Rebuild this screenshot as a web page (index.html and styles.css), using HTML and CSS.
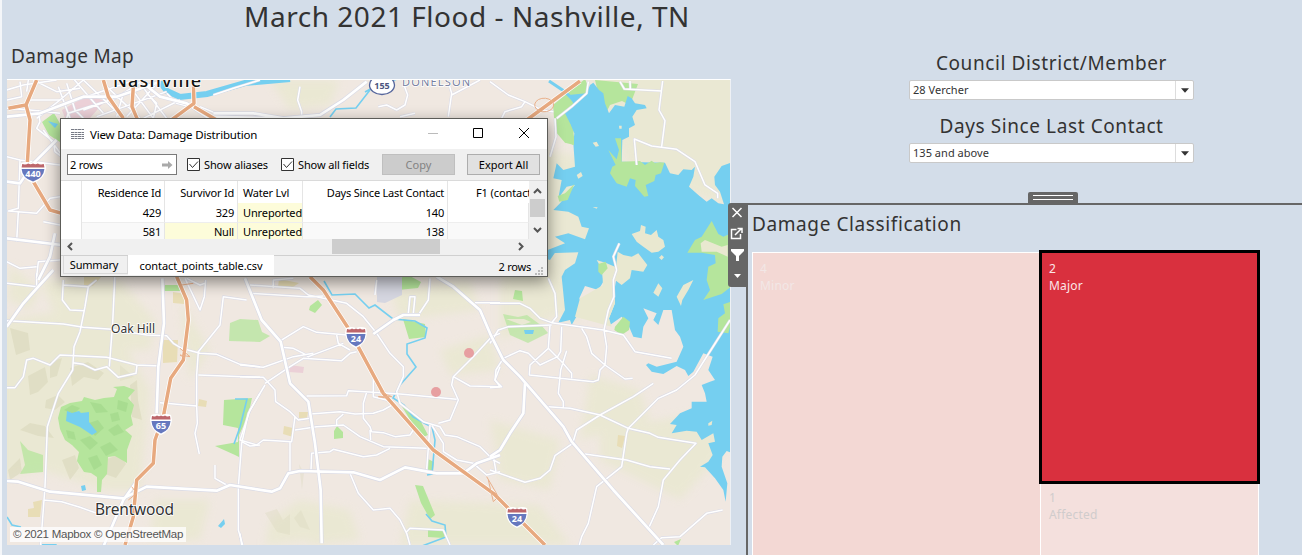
FILE: index.html
```html
<!DOCTYPE html>
<html lang="en">
<head>
<meta charset="utf-8">
<title>March 2021 Flood - Nashville, TN</title>
<link rel="stylesheet" href="styles.css">
</head>
<body>
<main class="dashboard">
<section class="left">
<h1>March 2021 Flood - Nashville, TN</h1>
<h2 class="map-title">Damage Map</h2>
<div class="map">
<svg class="map-svg" viewBox="7 80 723 465" width="723" height="465">
<defs>
<filter id="soft" x="-20%" y="-20%" width="140%" height="140%"><feGaussianBlur stdDeviation="4"/></filter>
<g id="minor">
<g>
<path d="M20 270 70 255 170 240M110 145 150 190 180 200M80 275 85 240 115 200 135 140M20 325 90 330 180 340M200 250 225 330 250 355M175 260 210 355M215 230 310 340M250 240 370 355M310 250 420 355M230 300 390 245M250 330 440 260M290 350 500 275M350 350 370 280 430 240M380 350 440 285 480 240M430 355 540 300M460 355 470 310 440 280M110 355 180 300 250 240M100 240 170 275 240 265M200 355 205 340 330 300M390 260 460 355M420 250 500 355"/>
<path d="M500 280 530 310 570 320M600 320 660 345 720 340M900 260 893 300 905 335 905 355M640 285 700 265 780 240M760 350 830 355"/>
</g>
<g transform="translate(0 225)">
<path d="M85 75 180 75M60 20 65 65 20 75M115 105 120 140 110 160 160 200 165 230 185 245M130 165 185 240M20 245 60 255 55 400 25 408 110 415 150 370 180 365M60 255 180 270M55 410 50 500M110 605 115 560 180 555M20 560 60 580 110 575M130 440 180 450"/>
</g>
<g transform="translate(1095 210)">
<path d="M115 40 128 75 120 105 95 120 65 105 40 110M105 140 150 130M260 75 345 30M250 140 260 70 250 35M375 35 430 75 480 95 530 120 565 125M480 95 470 110 420 125 410 145M575 145 620 110 665 70 670 35M570 145 573 200 555 260M765 35 778 57 890 63M795 33 796 57M893 33 882 120 900 152 890 230M815 285 808 207 860 228 935 238 990 275 1020 345 1058 370 1058 385"/>
</g>
<g transform="translate(0 810)">
<path d="M20 40 110 50 140 20M110 50 110 10M190 30 187 90 210 120 255 122M345 10 338 160 328 290M20 152 190 162 250 172 335 178 440 195 500 197 520 220 545 235 600 250 650 253 720 283 780 290M265 50 255 110 240 185 222 230 218 300 175 370 142 470 135 650 122 825M20 353 45 353 70 320 80 270 100 265 150 285 180 255 320 262 410 285 480 288M218 278 250 283 285 300 320 290 355 322 408 310 411 285M560 25 600 45 615 40M555 25 600 120 613 80 617 30M480 398 590 408 590 315 595 245 660 165 670 80 740 90M595 315 780 322M590 408 592 460 585 490 598 552M645 585 645 625 680 645M130 690 185 695 240 712 290 730M780 370 745 430 725 520 715 650 715 780 728 825M725 515 750 528 780 525M190 45 265 50 290 30"/>
</g>
<g transform="translate(720 810)">
<path d="M30 45 180 55 205 75 320 100 370 140 410 190 450 250 490 290 490 320 470 365 480 400 550 455 600 470 615 495 650 500 720 530 760 570 780 580M30 70 200 80 250 78M100 55 100 30 160 25M122 212 190 170 230 187 320 195M125 232 160 235 190 250 205 260 310 220M0 285 70 292 160 260 220 250M75 340 150 290 190 265 305 272 330 250 350 245M290 195 295 220 330 240M0 320 70 322 105 360 107 395 150 425 175 450 210 445M75 345 30 420 0 510 50 525 70 510 155 515 165 440M200 378 320 377 325 362 400 367 480 372 650 388M212 432 300 425 345 432 400 430 430 420 465 400M165 480 230 470 310 465 360 500 430 530 560 535M290 465 290 450 310 432M380 367 370 400 370 445 390 470 395 485 430 488 465 500 510 495 520 480M400 320 400 380 460 395M390 480 392 510M150 515 150 610M213 600 215 550 270 545 280 538 370 560 410 555 450 535M330 610 355 670 400 720 450 715 480 750 500 790 510 825M500 785 510 775 610 780 630 825M405 75 410 30M505 130 510 80 525 80 520 130M570 25 565 90 535 135M595 460 630 450 655 390 635 345 640 320 700 260 755 200 780 190M640 320 690 348 780 350M705 98 780 98M575 465 610 520 610 545 650 570 700 580 740 615 780 605M560 600 570 465M0 790 5 825M780 290 765 330 780 350"/>
</g>
<g transform="translate(1470 810)">
<path d="M0 100 90 100 120 115 150 145 185 158 270 170 340 180 400 195 435 245 545 265M185 158 200 140 195 70 175 25M0 220 25 180 55 170 185 165M180 165 175 235 215 275 245 310 245 325M215 170 212 245 203 260 150 285 115 250 90 242 40 265 18 300 15 330 35 350 0 353M230 242 212 300 205 370 220 395 220 412M175 235 120 285 118 315 310 335 325 330 330 300 345 285 350 230 342 180 355 120 372 80 370 30 380 0M275 175 290 200 305 250 345 285 405 327 428 325M175 410 240 415 330 435 415 475 480 490 505 502 618 520 570 570 520 630 505 710 478 770M490 340 430 380 330 435 260 480 248 520 195 557 180 600 150 625 105 637 0 600M720 150 615 315 560 360 505 385 415 475 410 490 395 590 320 650 295 760 275 800 268 825M285 552 410 570 480 590 540 597M490 825 515 803 570 800 650 730 698 720M0 558 12 570 18 605"/>
<path d="M380 0 370 -40 388 -80"/>
</g>
</g>
<g id="major">
<path d="M20 350 120 340 250 290 350 290 480 245M430 250 480 290 560 310 620 350 830 355M640 340 760 340 850 355 960 345 1030 300 1100 245"/>
<path d="M20 545 60 550 100 490 170 420M20 715 185 735M115 840 150 770 165 700"/>
<path d="M20 980 70 910 110 865 160 810M487 835 492 970 475 1100 470 1240M20 1443 55 1445 150 1475 370 1495 440 1460 650 1472 690 1455 815 1475 840 1465 865 1420 900 1413 1060 1417 1140 1440 1215 1402 1310 1420 1390 1420 1430 1390 1500 1365M310 1640 370 1500 420 1430 460 1390M735 835 785 960 842 1025 870 1150 925 1205 945 1330 962 1470 965 1630"/>
<path d="M1310 830 1360 860 1440 930 1470 1000 1510 1080 1560 1130 1690 1280 1715 1325 1840 1470 1990 1635"/>
<path d="M1120 1002 1180 960 1210 945 1260 945M1575 1150 1570 1240 1530 1300 1500 1350 1470 1370"/>
</g>
<g id="hwy">
<path d="M110 240 78 315 25 325M78 315 90 360 82 490 100 545 150 630 185 640M310 240 325 290 370 355M580 245 582 310 500 370M582 320 650 360"/>
<path d="M400 260 396 320 415 365"/>
<path d="M1740 243 1580 360"/>
<path d="M530 830 560 900 565 960 550 1080 512 1135 490 1250 465 1320 460 1390 410 1440 400 1550 375 1635"/>
<path d="M930 830 970 870 1045 985 1150 1180 1300 1350 1480 1480 1635 1635"/>
</g>
</defs>
<rect class="land" x="0" y="70" width="740" height="480"/>
<g filter="url(#soft)" class="field">
<path d="M0 320 70 310 125 345 150 390 140 490 105 490 40 470 0 480zM270 80 340 80 330 105 290 110zM40 280 120 280 155 320 150 350 70 350zM590 70H740V210L680 190 630 170zM540 270 560 270 565 290 545 300zM500 280 540 295 550 320 500 340zM600 430 720 410 725 450 680 500 600 460zM410 500 540 505 570 545 400 545zM440 350 490 335 500 370 450 375zM490 420 560 440 550 490 500 480zM300 500 350 510 360 540 310 545zM590 375 640 390 650 420 580 440zM500 260 560 255 580 320 510 310zM270 520 300 500 310 540 265 545zM180 300 210 350 190 380zM390 290 470 280 480 310 400 320zM540 150 620 160 620 250 540 290zM10 265 40 290 30 310 8 300zM155 500 210 500 200 540 150 540z"/>
</g>
<g class="hill">
<path d="M10 328 28 333 30 350 16 355zM28 376 45 367 48 382 38 392 30 395zM50 362 62 358 57 376 50 378zM70 368 88 362 104 373 98 380 84 377 72 386zM46 400 58 395 65 402 55 410 45 408zM20 430 30 423 45 426 54 438 38 436zM8 470 20 458 22 472 10 480zM62 460 75 455 79 468 70 480zM130 385 137 380 138 400 142 420 132 417zM107 459 120 454 126 464 116 478 105 474z"/>
<path opacity=".6" d="M265 513 277 509 283 520 290 514 290 535 277 532zM294 518 301 510 310 530 300 527zM299 464 304 473 302 490zM120 365 134 377 120 381z"/>
</g>
<g class="park">
<path d="M61 407 70 403 82 401 84 397 95 400 104 398 114 397 117 389 113 387 124 386 135 390 128 398 134 405 131 416 133 425 125 430 132 436 127 450 127 463 115 456 108 457 107 474 102 480 101 492 97 492 97 477 91 473 84 472 77 461 79 452 72 445 65 440 60 429 58 418zM224 400 252 398 248 417 239 435 239 457 235 455 215 446 238 442 238 428 223 425z"/>
<path opacity=".75" d="M20 441 28 450 43 455 43 472 20 474 25 465zM230 323 240 319 258 320 262 332 270 336 260 342 229 341z"/>
<path d="M310 306 318 300 322 305 315 313 309 310zM403 319 425 324 426 337 409 339zM398 400 406 407 420 420 428 435 421 438zM334 431 337 426 343 432 343 438 334 439zM428 459 434 462 433 470 426 470zM415 485 423 486 428 498 435 515 430 519 421 503zM428 529 446 529 444 538 428 537zM42 122 54 113 62 127 60 142 49 135zM400 278 408 275 421 282 418 288 398 290zM515 290 522 291 523 301 513 299zM674 542 681 539 678 546zM165 285 180 285 181 291 164 291z"/>
<path d="M503 314 518 317 527 315 542 326 548 333 528 343 510 335zM506 319 522 325 531 322 524 319z" fill-rule="evenodd" opacity=".7"/>
<path d="M553 105 585 79 590 91 575 105 573 145 555 130zM595 80 638 84 630 105 622 101 610 105 605 115 601 105z"/>
</g>
<path class="park-shade" d="M64 410 72 405 80 408 74 414zM90 402 101 404 108 412 96 413zM86 424 98 420 104 428 95 436zM108 430 118 424 124 432 114 436zM80 440 90 436 98 443 90 450zM100 447 110 442 118 450 106 456zM66 430 74 432 76 440 68 438zM118 400 128 403 126 412 117 409zM88 458 97 455 102 465 94 470zM110 414 118 412 120 420 112 422z"/>
<g class="sand"><path d="M163 340 178 340 177 362 163 363zM84 272 102 276 93 286 84 287zM173 292 186 294 184 304 173 303zM199 399 207 401 206 407 198 406zM299 412 308 412 307 418 299 418zM284 426 293 428 293 437 283 434zM33 502 42 500 40 517 28 517 28 509 34 508zM279 279 299 283 290 289 278 287zM618 435 625 436 622 448 617 446z"/></g>
<path class="pink" d="M62 110 88 95 105 101 90 118 65 118zM290 365 304 367 303 373 289 372z"/>
<path class="airport" d="M377 276 402 276 402 295 385 303 377 302z"/>
<g transform="translate(535 70) scale(.33333)">
<path class="water" d="M155 70 165 45 175 38 192 60 205 70 210 100 222 130 240 105 268 110 278 78 290 85 300 100 330 105 335 115 305 120 292 140 300 165 282 175 282 200 262 210 260 275 385 278 390 278 405 310 430 315 445 298 470 300 480 290 475 320 462 350 490 375 515 395 530 385 550 400 567 403 555 365 540 345 538 320 560 288 588 278 588 1148 575 1143 562 1160 560 1190 577 1240 572 1295 565 1260 540 1225 510 1192 495 1190 520 1175 533 1155 520 1120 540 1115 535 1090 500 1110 485 1085 455 1082 410 1090 425 1065 405 1062 435 1030 470 1015 470 995 515 995 510 970 500 945 525 935 540 930 520 900 533 860 505 850 475 905 460 918 450 900 425 888 385 912 350 905 333 885 340 880 365 890 425 875 445 830 435 800 420 780 410 720 385 720 370 765 355 750 365 730 325 715 340 745 325 770 320 805 295 800 280 765 260 740 225 765 222 745 240 700 240 650 248 600 200 590 205 635 190 660 150 648 133 685 140 705 130 730 110 765 105 750 70 758 90 720 80 620 90 600 120 580 130 547 40 550 38 540 90 520 60 500 100 490 150 508 162 475 140 470 130 440 100 425 55 420 75 400 120 345 95 350 70 385 80 330 55 325 65 280 85 300 120 290 115 220 118 190 105 160 90 130 115 100 100 75z"/>
<path class="water-line" d="M42 33 90 65 125 100"/>
<g class="park">
<path d="M60 183 70 140 90 135 107 165 117 200 117 225 90 218zM240 205 258 205 260 275 315 273 330 285 350 272 360 280 375 277 388 278 378 310 362 315 358 333 332 345 340 378 328 380 300 348 302 330 285 325 275 350 245 340 225 310 232 290 242 285 220 240 245 268 252 240zM68 378 90 370 118 342 98 390 73 395zM457 548 480 510 500 500 530 453 550 492 565 500 588 490 588 650 560 672 505 690 525 660 515 630 520 590 542 580 540 555 500 548zM565 703 588 695 588 760 580 790 548 785 550 745 570 730zM240 770 265 740 285 755 282 780 260 795 238 780z"/>
</g>
<path class="isle" d="M497 520 510 510 560 530 578 525 578 560 545 545 500 545zM290 492 315 483 318 465 332 470 330 490 348 495 365 480 370 500 385 510 390 530 370 545 350 548 325 530 305 515zM248 545 265 555 290 560 310 550 337 585 325 605 290 600 285 625 260 645 240 630 242 600zM185 570 215 580 240 590 238 650 205 680 202 600zM355 668 370 640 382 655 370 680zM425 680 445 645 475 630 460 660 442 690 438 708zM125 315 138 306 143 318 130 326zM173 218 185 215 192 228 182 230zM252 167 260 167 260 176 253 176zM173 411 188 412 185 416zM372 563 380 555 387 562 380 570zM520 1060 532 1052 530 1065 520 1067zM135 685 205 645 240 640 240 700 222 745 230 770 120 740z"/>
<path class="park" d="M190 582 212 575 218 595 200 615 190 605zM190 605"/>
<path class="water" d="M-10 550 40 547 60 548 45 570 -10 552z"/>
</g>
<g class="water"><path d="M67 411 72 413 79 411 81 413 89 412 89 422 97 432 92 435 80 427 66 421zM81 486 85 485 86 490 82 491zM218 526 224 519 225 524 221 528zM524 330 534 330 533 334 525 334zM48 121 58 124 55 128zM40 544 57 544 55 547 40 547z"/></g>
<g class="water-line-fine">
<path d="M7 517 12 525 21 527M235 399 247 399 240 427 234 444M324 281 332 295 355 294 369 308 375 305 393 319 415 321 427 328 425 338 407 344 407 354 416 367 400 385 393 398 404 405 413 417 424 423 432 427 435 440 432 474 427 475M426 514 432 521 445 525 446 537 422 546M330 117 336 109 356 108 370 90M365 92 374 87 400 78"/>
</g>
<path class="river" d="M160 82 167 91 180 97 207 94 245 83 290 79"/>
<g transform="scale(.33333)">
<use href="#minor" class="minor-case"/><use href="#minor" class="minor-core"/>
<use href="#major" class="major-case"/><use href="#major" class="major-core"/>
<use href="#hwy" class="hwy-case"/><use href="#hwy" class="hwy-core"/>
<path class="ramp" d="M540 1045 570 1070 540 1065 555 1075M1140 1175 1175 1190 1135 1190 1165 1195M530 840 545 855 580 850M395 1460 410 1480 385 1500M1605 320a25 18 0 1 0 55-10a25 18 0 1 0-55 10M1460 1430 1495 1490 1480 1505 1465 1440"/>
</g>
<g class="dot"><circle cx="469" cy="353" r="5"/><circle cx="436" cy="392" r="5"/></g>
<defs><g id="shield"><path fill="#fff" d="M-10-9Q-5-11 0-9Q5-11 10-9L11-4Q10 7 0 11Q-10 7-11-4z"/><path fill="#6678be" d="M-9.5-3H9.5Q9 6 0 9.5Q-9 6-9.5-3z"/><path fill="#bd666b" d="M-9-8Q-6-7-4-8.500Q-2-7 0-8.500Q2-7 4-8.500Q6-7 9-8L9.500-4.500H-9.500z"/></g></defs>
<g class="shield-text">
<use href="#shield" transform="translate(33 172) scale(1.2 1)"/><text x="33" y="177">440</text>
<use href="#shield" x="161" y="424"/><text x="161" y="428.500">65</text>
<use href="#shield" x="356" y="337"/><text x="356" y="341.500">24</text>
<use href="#shield" x="517" y="517"/><text x="517" y="521.500">24</text>
</g>
<ellipse class="route" cx="382" cy="85" rx="12.500" ry="9.500"/>
<text class="route-text" x="382" y="88.500">155</text>
<text class="place city" x="113" y="87" textLength="88">Nashville</text>
<text class="place area" x="402" y="85.500" textLength="68">DONELSON</text>
<text class="place" x="111" y="333" textLength="44" font-size="12">Oak Hill</text>
<text class="place" x="95" y="515" textLength="79" font-size="15.500">Brentwood</text>
</svg>
<div class="credit">© 2021 Mapbox © OpenStreetMap</div>
</div>
</section>
<section class="right">
<div class="filters">
<h2 class="f1">Council District/Member</h2>
<div class="select"><span>28 Vercher</span><i><svg width="9" height="5" viewBox="0 0 9 5"><path d="M0 0H9L4.500 5z"/></svg></i></div>
<h2 class="f2">Days Since Last Contact</h2>
<div class="select"><span>135 and above</span><i><svg width="9" height="5" viewBox="0 0 9 5"><path d="M0 0H9L4.500 5z"/></svg></i></div>
</div>
<div class="grip"><b></b><b></b></div>
<section class="panel">
<div class="tools">
<svg width="20" height="84" fill="none" stroke="#fff" stroke-width="1.500"><path d="M4.500 5 13.500 14M13.500 5 4.500 14"/><path d="M8.500 26.500H3.500V35.500H12.500V31M7 32 13 26M9.500 25.500H14V30"/><path d="M3 46H16V48L11 53V58H8V53L3 48zM6 71H13L9.500 75z" fill="#fff" stroke="none"/></svg>
</div>
<h2 class="panel-title">Damage Classification</h2>
<div class="treemap">
<div class="minor">4<br>Minor</div>
<div class="side"><div class="major">2<br>Major</div><div class="affected">1<br>Affected</div></div>
</div>
</section>
</section>
<section class="dialog">
<header><svg width="13" height="11" stroke="#777b86" stroke-dasharray="3 .500"><path d="M0 .5H13M0 3.500H13M0 5.500H13M0 7.500H13M0 9.500H13"/></svg><span class="caption">View Data: Damage Distribution</span>
<svg class="winbtns" width="110" height="30" fill="none"><path stroke="#bbb" d="M6 14.500H16"/><path stroke="#000" d="M51.500 9.500H60.500V18.500H51.500zM97 9 107 19M107 9 97 19"/></svg></header>
<div class="bar">
<div class="rows">2 rows<svg width="11" height="8"><path fill="#aaa" d="M0 2.500H6V0L10.500 4 6 8V5.500H0z"/></svg></div>
<label class="c1"><svg width="13" height="13"><path d="M.5 .5H12.500V12.500H.5z"/><path d="M2.500 6 5.500 9.500 11 3.500"/></svg><span>Show aliases</span></label>
<label class="c2"><svg width="13" height="13"><path d="M.5 .5H12.500V12.500H.5z"/><path d="M2.500 6 5.500 9.500 11 3.500"/></svg><span>Show all fields</span></label>
<div class="btn disabled">Copy</div><div class="btn">Export All</div>
</div>
<div class="grid-wrap">
<div class="grid">
<i></i><span>Residence Id</span><span>Survivor Id</span><span class="l">Water Lvl</span><span>Days Since Last Contact</span><span class="cut">F1 (contact</span>
<i></i><span>429</span><span>329</span><span class="l y">Unreported</span><span>140</span><span></span>
<i></i><span class="alt">581</span><span class="alt y">Null</span><span class="l alt y">Unreported</span><span class="alt">138</span><span class="alt"></span>
</div>
<svg class="vscroll" width="17" height="58" fill="none" stroke="#555" stroke-width="2"><path fill="#cdcdcd" stroke="none" d="M1 18H16V36H1z"/><path d="M5 12 8.500 8.500 12 12M5 47 8.500 50.500 12 47"/></svg>
</div>
<svg class="hscroll" width="486" height="16" fill="none" stroke="#555" stroke-width="2"><path fill="#cdcdcd" stroke="none" d="M271 0H379V15H271z"/><path d="M11 4 7.500 7.500 11 11M458 4 461.500 7.500 458 11"/></svg>
<footer><div class="tab">Summary</div><div class="tab on">contact_points_table.csv</div><span class="count">2 rows</span><svg width="9" height="9" fill="#bbb"><path d="M6 0h2v2H6zM3 3h2v2H3zM6 3h2v2H6zM0 6h2v2H0zM3 6h2v2H3zM6 6h2v2H6z"/></svg></footer>
</section>
</main>
</body>
</html>
```
FILE: styles.css
```css
* { box-sizing: border-box; }
body { margin: 0; background: #d3dde9; font-family: "Noto Sans", sans-serif; color: #333; overflow: hidden; }
.dashboard { position: relative; display: grid; grid-template-columns: 744px 556px; width: 1302px; height: 555px; border-left: 2px solid #f4f6f9; overflow: hidden; white-space: nowrap; }
h1, h2 { margin: 0; font-weight: 400; }
h1 { height: 42px; padding-left: 242px; font-size: 28px; line-height: 33px; letter-spacing: .53px; }
h2 { font-size: 19px; letter-spacing: .6px; }
.map-title { height: 37px; padding-left: 9px; line-height: 29px; letter-spacing: .3px; }
.map { position: relative; width: 724px; height: 466px; margin-left: 5px; border-top: 1px solid #fff; border-right: 1px solid #eef1f5; }
.map-svg { display: block; }
.credit { position: absolute; left: 3px; bottom: 3px; height: 15px; padding: 0 3px; background: rgba(255,255,255,.75); color: #555; font: 11.5px/15px "Liberation Sans", sans-serif; letter-spacing: -.25px; }
.land { fill: #f0e8e1; }
.field { fill: #e9e8d0; opacity: .8; }
.hill { fill: #d9d7ba; opacity: .55; }
.park { fill: #b5e59c; }
.park-shade { fill: #a3d88b; opacity: .7; }
.sand { fill: #e8ddb6; }
.pink { fill: #ebd0d7; }
.airport { fill: #d5d6e0; }
.water { fill: #75cff0; }
.isle { fill: #e9e8d0; }
.water-line { fill: none; stroke: #75cff0; stroke-width: 9; }
.water-line-fine { fill: none; stroke: #75cff0; stroke-width: 1.6; }
.river { fill: none; stroke: #75cff0; stroke-width: 6; }
use { fill: none; stroke-linejoin: round; }
.minor-case { stroke: #dcdce7; stroke-width: 8; }
.minor-core { stroke: #fff; stroke-width: 4.5; }
.major-case { stroke: #dadbe6; stroke-width: 12; }
.major-core { stroke: #fff; stroke-width: 8; }
.hwy-case { stroke: #fff; stroke-width: 15; }
.hwy-core { stroke: #e7a97f; stroke-width: 10.5; }
.ramp { fill: none; stroke: #e9b18c; stroke-width: 3; }
.dot { fill: #e79fa1; }
.shield-text { font: 700 9px "Noto Sans", sans-serif; text-anchor: middle; }
.shield-text text { fill: #fff; }
.route { fill: #fff; stroke: #56669c; stroke-width: 1.3; }
.route-text { font: 700 9px "Noto Sans", sans-serif; text-anchor: middle; fill: #4b5580; }
.place { fill: #333; stroke: #fff; stroke-width: 1.5; paint-order: stroke; }
.city { font-size: 18px; font-weight: 500; fill: #111; }
.area { font-size: 11px; fill: #777ea0; }
.right { display: flex; flex-direction: column; min-width: 0; }
.filters { width: 285px; margin-left: 163px; padding-top: 50px; text-align: center; }
.filters h2 { height: 30px; line-height: 27px; }
.filters .f2 { height: 43px; line-height: 53px; }
.select { display: flex; height: 20px; background: #fff; border: 1px solid #c9c9c9; border-radius: 2px; font-size: 11px; line-height: 18px; letter-spacing: .03px; }
.select span { flex: 1; padding-left: 3px; text-align: left; }
.select i { width: 18px; border-left: 1px solid #ddd; display: grid; place-items: center; }
.select svg { fill: #333; width: 8px; }
.grip { width: 50px; height: 11px; margin: 29px 0 0 282px; background: #666; border-radius: 2px 2px 0 0; padding: 3px 5px 0; }
.grip b { display: block; height: 1px; margin-bottom: 3px; background: #fff; }
.panel { position: relative; height: 352px; border: solid #666; border-width: 2px 0 0 2px; }
.tools { position: absolute; left: -20px; top: -2px; width: 20px; height: 84px; background: #666; border-radius: 3px 0 0 3px; }
.panel-title { height: 47px; padding-left: 4px; line-height: 39px; }
.treemap { display: grid; grid-template-columns: 288px 219px; padding-left: 4px; height: 304px; font-size: 12px; line-height: 17px; letter-spacing: .2px; }
.minor { background: #f3d8d4; border: 1px solid #fff; border-right: 0; padding: 7px; color: #f2e7e6; }
.side { display: grid; grid-template-rows: 228px 76px; border-left: 1px solid #fff; border-right: 1px solid #fff; padding-top: 1px; }
.major { margin: 0 1px 0 1px; background: #d9303e; outline: 3px solid #000; padding: 7px 7px; color: #fbe6e8; z-index: 1; }
.affected { background: #f4e0dd; padding: 8px 8px; color: #d0cccc; }
.dialog { position: absolute; left: 58px; top: 118px; width: 488px; height: 159px; border: 1px solid #5c5c58; background: #f0f0f0; box-shadow: 0 5px 15px rgba(0,0,0,.45); color: #000; font-size: 11px; letter-spacing: -.2px; }
.dialog header { display: flex; align-items: center; height: 30px; padding-left: 10px; background: #fff; }
.caption { flex: none; margin-left: 6px; width: 332px; font-size: 11.5px; letter-spacing: -.17px; }
.winbtns { flex: none; }
.bar { display: flex; align-items: center; height: 32px; padding-left: 6px; border-bottom: 1px solid #dadada; }
.rows { display: flex; align-items: center; justify-content: space-between; width: 110px; height: 21px; padding: 0 3px 0 2px; border: 1px solid #7a7a7a; background: #fff; }
.bar label { display: flex; align-items: center; gap: 4px; }
.bar label svg { fill: #fff; stroke: #333; }
.c1 { width: 94px; margin-left: 10px; }
.c1 span, .c2 span { letter-spacing: -.13px; }
.c2 { width: 101px; }
.btn { width: 73px; height: 21px; border: 1px solid #adadad; background: #e1e1e1; text-align: center; line-height: 19px; letter-spacing: 0; }
.btn + .btn { margin-left: 12px; }
.disabled { background: #ccc; border-color: #bfbfbf; color: #838383; }
.grid-wrap { display: flex; height: 58px; }
.grid { display: grid; grid-template-columns: 21px 83px 73px 65px 145px 81px; grid-template-rows: 22px 19px 17px; width: 468px; background: #fff; overflow: hidden; }
.grid i { border-right: 1px solid #e5e5e5; }
.grid span { padding-right: 3px; border-right: 1px solid #e5e5e5; text-align: right; line-height: 24px; overflow: hidden; }
.grid span:nth-child(n+7) { line-height: 19px; }
.grid .l { padding: 0 0 0 5px; text-align: left; }
.grid .l.y { letter-spacing: -.12px; }
.grid .cut { padding: 0 0 0 28px; text-align: left; border: 0; letter-spacing: -.1px; }
.grid .alt { background: #f9f9f9; border-top: 1px solid #eee; line-height: 17px; }
.grid span.alt:nth-child(n+7) { line-height: 18px; }
.grid .y { background: #fdfcda; }
.vscroll, .hscroll { display: block; }
.dialog footer { display: flex; height: 21px; border-top: 1px solid #d0d0d0; padding-left: 2px; }
.tab { width: 65px; height: 18px; border: 1px solid #d9d9d9; border-top: 0; padding-right: 3px; text-align: center; line-height: 18px; }
.on { width: 146px; height: 20px; margin-top: -1px; padding: 0; border: 0; background: #fff; line-height: 22px; letter-spacing: -.1px; }
.count { margin-left: auto; line-height: 22px; }
footer svg { margin: 11px 3px 0 4px; }
```
